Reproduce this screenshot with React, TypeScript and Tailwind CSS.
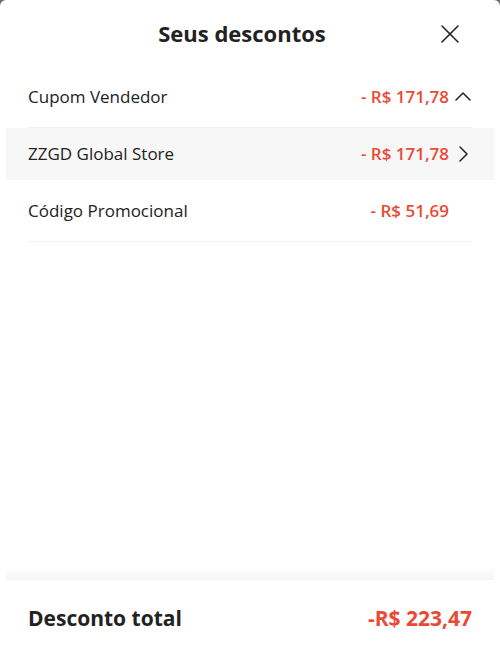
import React from 'react';

type Row = {
  label: string;
  amount: string;
  icon?: 'up' | 'right';
  highlighted?: boolean;
  divider?: boolean;
  height: string;
};

const rows: Row[] = [
  { label: 'Cupom Vendedor', amount: '- R$ 171,78', icon: 'up', divider: true, height: 'h-[61px]' },
  { label: 'ZZGD Global Store', amount: '- R$ 171,78', icon: 'right', highlighted: true, height: 'h-[52px]' },
  { label: 'Código Promocional', amount: '- R$ 51,69', divider: true, height: 'h-[62px]' },
];

const ChevronUp = () => (
  <svg width="18" height="18" viewBox="0 0 18 18" fill="none" stroke="#222" strokeWidth="1.5" strokeLinecap="round" strokeLinejoin="round">
    <path d="M2 12 L9 5 L16 12" />
  </svg>
);

const ChevronRight = () => (
  <svg width="18" height="18" viewBox="0 0 18 18" fill="none" stroke="#222" strokeWidth="1.5" strokeLinecap="round" strokeLinejoin="round">
    <path d="M6 2 L13 9 L6 16" />
  </svg>
);

export default function App() {
  return (
    <div className="w-[500px] h-[656px] bg-[#6b6b6b]" style={{ fontFamily: '"Open Sans", "Noto Sans", sans-serif' }}>
      <div className="flex flex-col h-full bg-white rounded-t-[6px] text-[#222]">
        {/* header */}
        <div className="relative flex items-center justify-center h-[67px] pb-[1px] pr-[16px]">
          <h1 className="text-[22px] font-bold">Seus descontos</h1>
          <button className="absolute right-[40px] top-[24px]" aria-label="Fechar">
            <svg width="20" height="20" viewBox="0 0 20 20" fill="none" stroke="#222" strokeWidth="1.6" strokeLinecap="round">
              <path d="M2 2 L18 18 M18 2 L2 18" />
            </svg>
          </button>
        </div>

        {/* list */}
        <div className="flex flex-col">
          {rows.map((row) => (
            <div key={row.label} className={row.highlighted ? 'mx-[6px] bg-[#f7f7f7]' : 'mx-[6px]'}>
              <div className={`flex items-center ${row.height} mx-[22px] ${row.divider ? 'border-b border-[#f1f1f1]' : ''}`}>
                <span className="flex-1 text-[17px]">{row.label}</span>
                <span className="text-[17px] font-semibold text-[#ea4a35]">{row.amount}</span>
                <span className="w-[23px] flex justify-end">
                  {row.icon === 'up' && <ChevronUp />}
                  {row.icon === 'right' && <ChevronRight />}
                </span>
              </div>
            </div>
          ))}
        </div>

        <div className="flex-1" />

        {/* footer */}
        <div className="mx-[6px] h-[14px] bg-gradient-to-b from-white to-[#f5f5f5]" />
        <div className="flex items-center justify-between h-[76px] pt-[2px] px-[28px]">
          <span className="text-[21px] font-bold">Desconto total</span>
          <span className="text-[21px] font-bold text-[#ea4a35]">-R$ 223,47</span>
        </div>
      </div>
    </div>
  );
}
